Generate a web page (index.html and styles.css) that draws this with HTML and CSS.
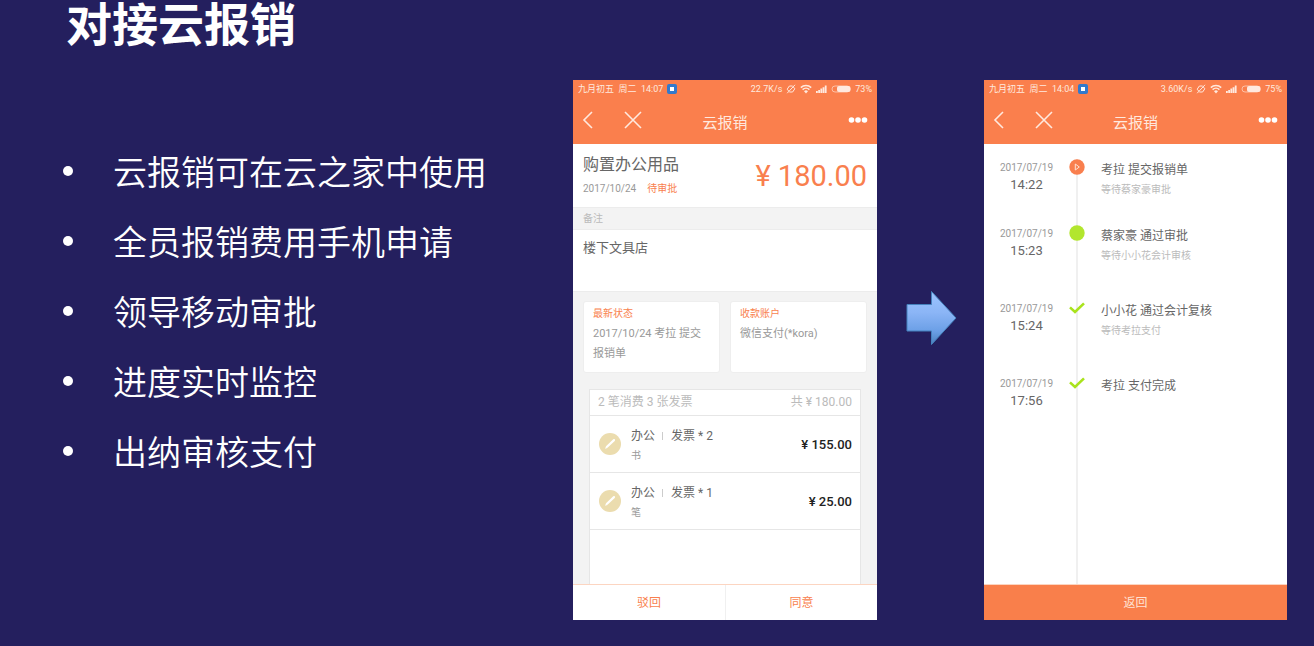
FILE: index.html
```html
<!DOCTYPE html>
<html lang="zh-CN">
<head>
    <meta charset="UTF-8">
    <meta name="viewport" content="width=device-width, initial-scale=1.0">
    <title>对接云报销</title>
    <link rel="stylesheet" href="styles.css">
</head>
<body>
    <svg class="sprite" aria-hidden="true">
        <symbol id="mute" viewBox="0 0 10 10">
            <path d="M3 7.4L1.2 5.2 3.4 2h3.2M7 2.6l1.8 2.2L6.6 8H3.400M1.200 9.200L9 .8" fill="none" stroke="currentColor"/>
        </symbol>
        <symbol id="wifi" viewBox="0 0 12 10">
            <path d="M.8 3.6a7.6 7.6 0 0 1 10.4 0M2.6 5.6a5 5 0 0 1 6.8 0" fill="none" stroke="currentColor" stroke-width="1.5"/>
            <path d="M4 7.2a3 3 0 0 1 4 0L6 9.4z" fill="currentColor"/>
        </symbol>
        <symbol id="signal" viewBox="0 0 11 10">
            <path d="M0 7h1.8v2H0zM2.2 6H4v3H2.200zM4.400 4.600h1.800V9H4.400zM6.600 3.200h1.800V9H6.600zM8.800 1.600h1.800V9H8.800z" fill="currentColor"/>
        </symbol>
        <symbol id="battery" viewBox="0 0 20 10">
            <rect x="1" y="2" width="18" height="6" rx="3" fill="none" stroke="currentColor" stroke-opacity=".6"/>
            <rect x="6" y="2" width="13.5" height="6" rx="2" fill="currentColor"/>
        </symbol>
        <symbol id="back" viewBox="0 0 12 18">
            <path d="M10 1L2 9l8 8" fill="none" stroke="currentColor" stroke-width="1.6"/>
        </symbol>
        <symbol id="close" viewBox="0 0 18 18">
            <path d="M1 1l16 16M17 1L1 17" fill="none" stroke="currentColor" stroke-width="1.6"/>
        </symbol>
        <symbol id="more" viewBox="0 0 20 6">
            <circle cx="3.5" cy="3" r="2.8" fill="currentColor"/>
            <circle cx="10" cy="3" r="2.8" fill="currentColor"/>
            <circle cx="16.5" cy="3" r="2.8" fill="currentColor"/>
        </symbol>
        <symbol id="pen" viewBox="0 0 22 22">
            <circle cx="11" cy="11" r="11" fill="#ebdcae"/>
            <path d="M8 13.7l7-6.6" stroke="#fff" stroke-width="2.2" stroke-linecap="round"/>
            <path d="M6 15.8l1-2.4 1.5 1.5z" fill="#fff"/>
        </symbol>
        <symbol id="check" viewBox="0 0 16 16">
            <path d="M1 7.4l5 4.6 9-8.6" fill="none" stroke="#a9e31c" stroke-width="2.6"/>
        </symbol>
    </svg>

    <main class="slide">
        <section class="intro">
            <h1>对接云报销</h1>
            <ul class="points">
                <li>云报销可在云之家中使用</li>
                <li>全员报销费用手机申请</li>
                <li>领导移动审批</li>
                <li>进度实时监控</li>
                <li>出纳审核支付</li>
            </ul>
        </section>

        <section class="phone">
            <header class="topbar">
                <div class="status">
                    <span>九月初五&nbsp; 周二&nbsp; 14:07</span>
                    <i class="app-dot"></i>
                    <span class="speed">22.7K/s</span>
                    <svg width="10" height="10"><use href="#mute"/></svg>
                    <svg width="12" height="10"><use href="#wifi"/></svg>
                    <svg width="11" height="10"><use href="#signal"/></svg>
                    <svg width="20" height="10"><use href="#battery"/></svg>
                    <span>73%</span>
                </div>
                <nav class="nav">
                    <div class="nav-side">
                        <button type="button" aria-label="返回"><svg width="12" height="18"><use href="#back"/></svg></button>
                        <button type="button" aria-label="关闭"><svg width="18" height="18"><use href="#close"/></svg></button>
                    </div>
                    <h2>云报销</h2>
                    <div class="nav-side nav-right">
                        <button type="button" aria-label="更多"><svg width="20" height="6"><use href="#more"/></svg></button>
                    </div>
                </nav>
            </header>

            <div class="summary">
                <div>
                    <h3>购置办公用品</h3>
                    <p class="meta"><span>2017/10/24</span><span class="accent">待审批</span></p>
                </div>
                <strong class="total">¥ 180.00</strong>
            </div>
            <div class="label-row">备注</div>
            <p class="remark">楼下文具店</p>

            <div class="detail">
                <div class="cards">
                    <div class="card">
                        <h4>最新状态</h4>
                        <p>2017/10/24 考拉 提交报销单</p>
                    </div>
                    <div class="card">
                        <h4>收款账户</h4>
                        <p>微信支付(*kora)</p>
                    </div>
                </div>
                <div class="invoices">
                    <div class="invoices-head"><span>2 笔消费 3 张发票</span><span>共 ¥ 180.00</span></div>
                    <div class="invoice">
                        <svg width="22" height="22"><use href="#pen"/></svg>
                        <div class="invoice-text">
                            <p class="kind"><span>办公</span><span>发票 * 2</span></p>
                            <p class="note">书</p>
                        </div>
                        <span class="price">¥ 155.00</span>
                    </div>
                    <div class="invoice">
                        <svg width="22" height="22"><use href="#pen"/></svg>
                        <div class="invoice-text">
                            <p class="kind"><span>办公</span><span>发票 * 1</span></p>
                            <p class="note">笔</p>
                        </div>
                        <span class="price">¥ 25.00</span>
                    </div>
                </div>
            </div>

            <footer class="actions">
                <button type="button">驳回</button>
                <button type="button">同意</button>
            </footer>
        </section>

        <svg class="arrow" width="52" height="56" viewBox="0 0 52 56" aria-hidden="true">
            <defs>
                <linearGradient id="arrowFill" x1="0" y1="0" x2="0" y2="1">
                    <stop offset="0" stop-color="#9cc4ff"/>
                    <stop offset=".4" stop-color="#8bb5f6"/>
                    <stop offset=".75" stop-color="#6b9fe6"/>
                    <stop offset="1" stop-color="#4a80bd"/>
                </linearGradient>
            </defs>
            <path d="M2 14.500h24.500V1.500l24.500 26.500-24.500 26.500V41H2z" fill="url(#arrowFill)" stroke="#4582bd"/>
        </svg>

        <section class="phone">
            <header class="topbar">
                <div class="status">
                    <span>九月初五&nbsp; 周二&nbsp; 14:04</span>
                    <i class="app-dot"></i>
                    <span class="speed">3.60K/s</span>
                    <svg width="10" height="10"><use href="#mute"/></svg>
                    <svg width="12" height="10"><use href="#wifi"/></svg>
                    <svg width="11" height="10"><use href="#signal"/></svg>
                    <svg width="20" height="10"><use href="#battery"/></svg>
                    <span>75%</span>
                </div>
                <nav class="nav">
                    <div class="nav-side">
                        <button type="button" aria-label="返回"><svg width="12" height="18"><use href="#back"/></svg></button>
                        <button type="button" aria-label="关闭"><svg width="18" height="18"><use href="#close"/></svg></button>
                    </div>
                    <h2>云报销</h2>
                    <div class="nav-side nav-right">
                        <button type="button" aria-label="更多"><svg width="20" height="6"><use href="#more"/></svg></button>
                    </div>
                </nav>
            </header>

            <ol class="timeline">
                <li class="submitted">
                    <div class="when"><span>2017/07/19</span><b>14:22</b></div>
                    <div class="track">
                        <svg width="16" height="16" viewBox="0 0 16 16">
                            <circle cx="8" cy="8" r="7.7" fill="#f97f4e"/>
                            <path d="M6.3 5v6l4-3z" fill="none" stroke="#ffe3d5"/>
                        </svg>
                    </div>
                    <div class="what"><h3>考拉 提交报销单</h3><p>等待蔡家豪审批</p></div>
                </li>
                <li>
                    <div class="when"><span>2017/07/19</span><b>15:23</b></div>
                    <div class="track">
                        <svg width="16" height="16" viewBox="0 0 16 16"><circle cx="8" cy="8" r="7.7" fill="#b2e62e"/></svg>
                    </div>
                    <div class="what"><h3>蔡家豪 通过审批</h3><p>等待小小花会计审核</p></div>
                </li>
                <li>
                    <div class="when"><span>2017/07/19</span><b>15:24</b></div>
                    <div class="track"><svg width="16" height="16"><use href="#check"/></svg></div>
                    <div class="what"><h3>小小花 通过会计复核</h3><p>等待考拉支付</p></div>
                </li>
                <li>
                    <div class="when"><span>2017/07/19</span><b>17:56</b></div>
                    <div class="track"><svg width="16" height="16"><use href="#check"/></svg></div>
                    <div class="what"><h3>考拉 支付完成</h3></div>
                </li>
            </ol>

            <button class="return" type="button">返回</button>
        </section>
    </main>
</body>
</html>
```
FILE: styles.css
```css
* {
    box-sizing: border-box;
}
body {
    margin: 0;
    background-color: #241f5e;
    color: #666;
    font-family: Roboto, "Noto Sans CJK SC", sans-serif;
}
h1, h2, h3, h4, p, ul, ol {
    margin: 0;
    padding: 0;
    font-weight: 400;
}
ul, ol {
    list-style: none;
}
button {
    margin: 0;
    padding: 0;
    border: 0;
    background: none;
    color: inherit;
    font: inherit;
    cursor: pointer;
}
svg {
    display: block;
    flex: none;
}
.sprite {
    position: absolute;
    width: 0;
    height: 0;
}
.slide {
    display: grid;
    grid-template-columns: 1fr 304px 107px 303px;
    min-height: 100vh;
    padding: 0 27px 26px 63px;
}

/* left column */
.intro {
    color: #fff;
    font-family: "Noto Sans CJK SC", sans-serif;
}
.intro h1 {
    padding-left: 3px;
    font-size: 46px;
    font-weight: 700;
    line-height: 42px;
}
.points {
    margin-top: 94px;
}
.points li {
    display: flex;
    align-items: center;
    gap: 40px;
    font-size: 34px;
    font-weight: 350;
    line-height: 70px;
}
.points li::before {
    content: "";
    width: 10px;
    height: 10px;
    border-radius: 50%;
    background-color: #fff;
}

/* phones */
.phone {
    display: flex;
    flex-direction: column;
    margin-top: 80px;
    background-color: #fff;
}
.arrow {
    align-self: center;
    justify-self: center;
    margin-top: 16px;
}
.topbar {
    height: 64px;
    background-color: #fa7f4d;
    color: #ffe9df;
}
.status {
    display: flex;
    align-items: center;
    gap: 4px;
    height: 17px;
    padding: 0 5px;
    font-size: 9px;
    white-space: nowrap;
}
.app-dot {
    width: 10px;
    height: 10px;
    border: 3px solid #3279cc;
    border-radius: 2px;
    background-color: #fff;
}
.speed {
    margin-left: auto;
}
.nav {
    display: flex;
    align-items: center;
    height: 46px;
    padding: 0 9px;
}
.nav-side {
    display: flex;
    flex: 1;
    align-items: center;
    gap: 30px;
    height: 100%;
}
.nav-right {
    justify-content: flex-end;
    color: #fff;
}
.nav h2 {
    padding-top: 2px;
    font-size: 15px;
}

/* claim */
.summary {
    display: flex;
    align-items: center;
    justify-content: space-between;
    height: 63px;
    padding: 0 10px;
}
.summary h3 {
    font-size: 16px;
    line-height: 26px;
}
.meta {
    display: flex;
    gap: 11px;
    color: #999;
    font-size: 10px;
    line-height: 22px;
}
.accent {
    color: #f97f4e;
}
.total {
    color: #f97f4e;
    font-size: 29px;
    font-weight: 400;
}
.label-row {
    padding: 1px 10px 0;
    border: 1px solid #ececec;
    border-width: 1px 0;
    background-color: #f3f3f3;
    color: #bbb;
    font-size: 10px;
    line-height: 20px;
}
.remark {
    height: 61px;
    padding: 8px 10px;
    font-size: 13px;
    line-height: 20px;
}
.detail {
    display: flex;
    flex: 1;
    flex-direction: column;
    padding: 9px 10px 0;
    border-top: 1px solid #ececec;
    background-color: #f3f3f3;
}
.cards {
    display: grid;
    grid-template-columns: 1fr 1fr;
    gap: 10px;
}
.card {
    min-height: 72px;
    padding: 2px 9px;
    border: 1px solid #eee;
    border-radius: 3px;
    background-color: #fff;
    color: #999;
    font-size: 11px;
    line-height: 20px;
}
.card h4 {
    color: #f97f4e;
    font-size: 10px;
}
.invoices {
    flex: 1;
    margin: 16px 6px 0;
    border: 1px solid #e6e6e6;
    border-bottom: 0;
    background-color: #fff;
}
.invoices-head {
    display: flex;
    justify-content: space-between;
    padding: 0 8px;
    border-bottom: 1px solid #e6e6e6;
    color: #bbb;
    font-size: 12px;
    line-height: 25px;
}
.invoice {
    display: flex;
    align-items: center;
    gap: 10px;
    height: 57px;
    padding: 0 8px 0 9px;
    border-bottom: 1px solid #e6e6e6;
}
.invoice-text {
    flex: 1;
    padding-top: 4px;
}
.kind {
    display: flex;
    align-items: center;
    font-size: 12px;
    line-height: 20px;
}
.kind span + span::before {
    content: "";
    display: inline-block;
    width: 1px;
    height: 8px;
    margin: 0 8px 0 7px;
    background-color: #ccc;
}
.note {
    color: #999;
    font-size: 10px;
    line-height: 20px;
}
.price {
    color: #222;
    font-size: 13px;
    font-weight: 500;
}
.actions {
    display: grid;
    grid-template-columns: 1fr 1fr;
    height: 36px;
    border-top: 1px solid #fcd5c1;
    color: #f97f4e;
    font-size: 12px;
}
.actions button {
    padding-bottom: 3px;
}
.actions button + button {
    border-left: 1px solid #f0f0f0;
}

/* progress */
.timeline {
    display: flex;
    flex: 1;
    flex-direction: column;
    padding: 15px 16px 0;
}
.timeline li {
    display: grid;
    grid-template-columns: 53px 16px 1fr;
    column-gap: 16px;
    min-height: 75px;
}
.timeline .submitted {
    min-height: 66px;
}
.timeline li:last-child {
    flex: 1;
}
.when {
    display: flex;
    flex-direction: column;
    align-items: center;
    color: #999;
    font-size: 10px;
    line-height: 18px;
}
.when b {
    color: #666;
    font-size: 13px;
    font-weight: 400;
    line-height: 16px;
}
.track {
    background: linear-gradient(#f0f0f0, #f0f0f0) center / 2px 100% no-repeat;
}
.what {
    padding-top: 1px;
}
.what h3 {
    font-size: 12px;
    line-height: 20px;
}
.what p {
    color: #bbb;
    font-size: 10px;
    line-height: 20px;
}
.return {
    height: 36px;
    padding-bottom: 2px;
    border-top: 1px solid #fcd5c1;
    background-color: #f97f4b;
    color: #ffe3d5;
    font-size: 12px;
}
```
